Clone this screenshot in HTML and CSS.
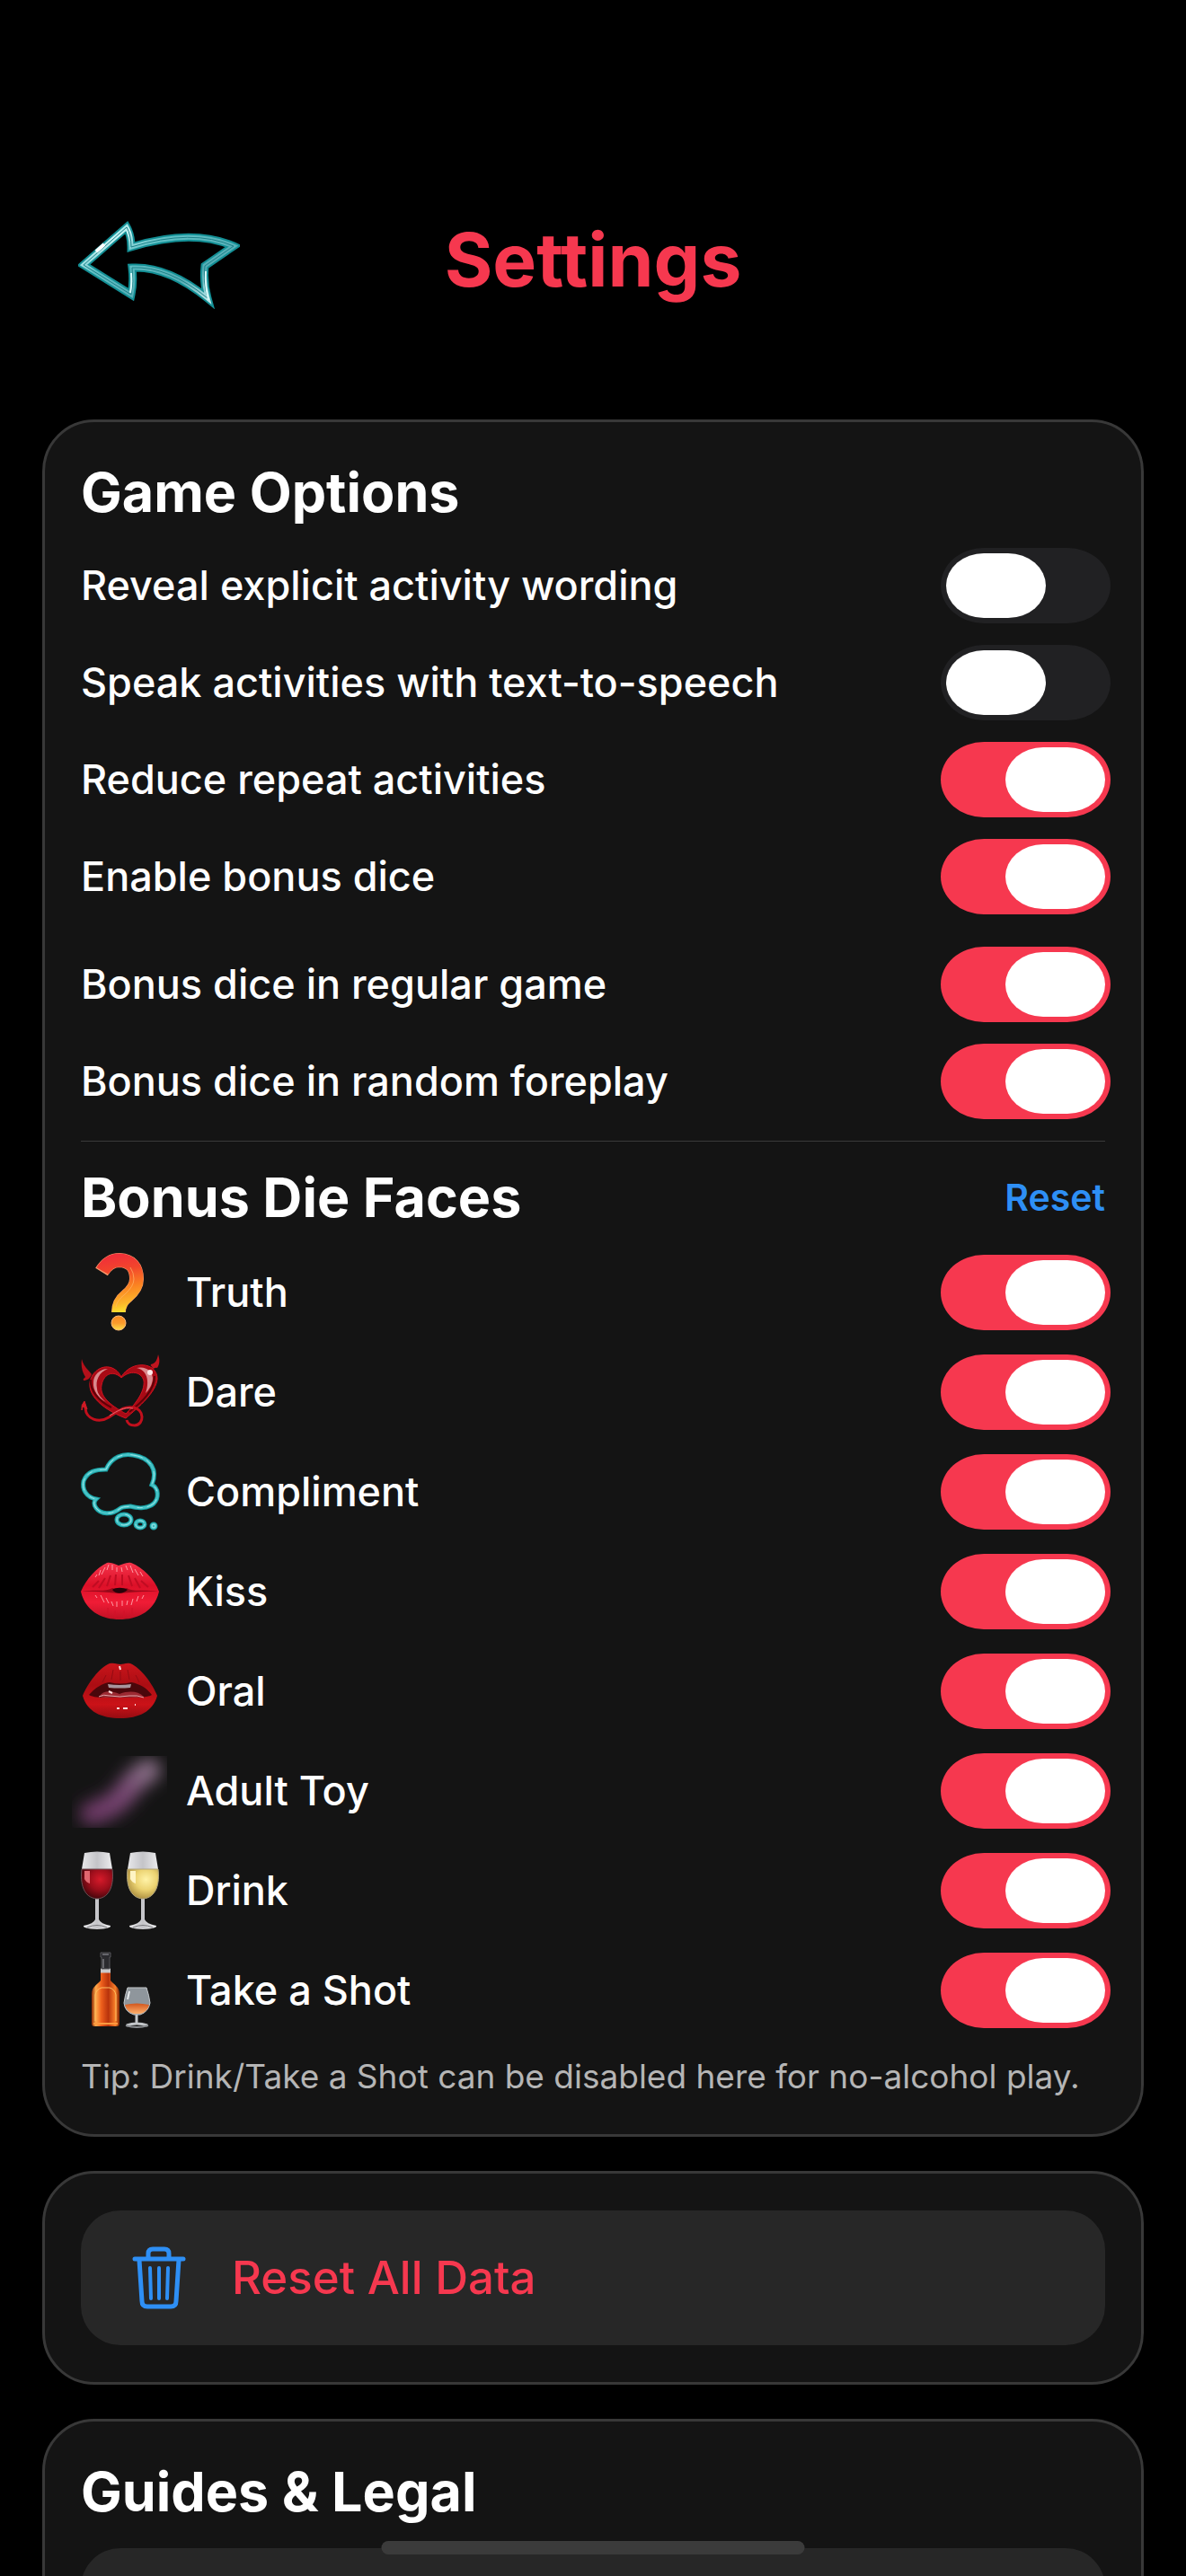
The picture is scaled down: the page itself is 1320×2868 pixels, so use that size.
FILE: index.html
```html
<!DOCTYPE html>
<html lang="en">

<head>
    <meta charset="utf-8">
    <meta name="viewport" content="width=device-width, initial-scale=1">
    <title>Settings</title>
    <link rel="stylesheet" href="styles.css">
</head>

<body>
    <header class="header">
        <button class="back" aria-label="Back">
            <svg viewBox="0 0 180 108" width="180" height="108" fill="none">
                <defs>
                    <linearGradient id="glass" x1="0" y1="0" x2="1" y2="1">
                        <stop offset="0" stop-color="#4fc4c8" />
                        <stop offset=".18" stop-color="#c9f5f5" />
                        <stop offset=".35" stop-color="#5fc0c5" />
                        <stop offset=".7" stop-color="#55adb5" />
                        <stop offset="1" stop-color="#d5f7f8" />
                    </linearGradient>
                    <path id="arrow" d="M6 59L54 17Q59 26 59 39Q127 18 173 38L141 60Q139 78 144 96Q100 60 60 62Q62 78 59 92Z" />
                </defs>
                <use href="#arrow" stroke="#138f95" stroke-width="9" />
                <use href="#arrow" stroke="url(#glass)" stroke-width="5" />
                <use href="#arrow" stroke="#1d8189" stroke-width="1" />
                <path d="M20 44L29 36" stroke="#fff" stroke-width="4" />
                <path d="M59 68Q60 80 58 90M142 66Q141 82 145 98" stroke="#d9fafa" stroke-width="2" />
            </svg>
        </button>
        <h1 class="title">Settings</h1>
    </header>

    <main class="content">
        <section class="card">
            <h2 class="heading">Game Options</h2>
            <div class="options">
                <div class="row">
                    <label for="explicit">Reveal explicit activity wording</label>
                    <input class="switch" type="checkbox" id="explicit">
                </div>
                <div class="row">
                    <label for="speak">Speak activities with text-to-speech</label>
                    <input class="switch" type="checkbox" id="speak">
                </div>
                <div class="row">
                    <label for="repeat">Reduce repeat activities</label>
                    <input class="switch" type="checkbox" id="repeat" checked>
                </div>
                <div class="row">
                    <label for="bonus">Enable bonus dice</label>
                    <input class="switch" type="checkbox" id="bonus" checked>
                </div>
            </div>
            <div class="options bonus">
                <div class="row">
                    <label for="regular">Bonus dice in regular game</label>
                    <input class="switch" type="checkbox" id="regular" checked>
                </div>
                <div class="row">
                    <label for="foreplay">Bonus dice in random foreplay</label>
                    <input class="switch" type="checkbox" id="foreplay" checked>
                </div>
            </div>

            <hr class="divider">

            <div class="headingRow">
                <h2 class="heading">Bonus Die Faces</h2>
                <button class="reset">Reset</button>
            </div>

            <div class="faces">
                <div class="row face">
                    <svg class="icon" viewBox="0 0 88 88" fill="none">
                        <defs>
                            <linearGradient id="fire" gradientUnits="userSpaceOnUse" x1="30" y1="0" x2="42" y2="67">
                                <stop offset="0" stop-color="#f02a3c" />
                                <stop offset=".3" stop-color="#f2452c" />
                                <stop offset=".6" stop-color="#fb8322" />
                                <stop offset=".85" stop-color="#fcb52a" />
                                <stop offset="1" stop-color="#fbe32f" />
                            </linearGradient>
                            <linearGradient id="dot" x1="0" y1="0" x2="0" y2="1">
                                <stop offset="0" stop-color="#f98a22" />
                                <stop offset=".5" stop-color="#fb9a2c" />
                                <stop offset="1" stop-color="#fde04a" />
                            </linearGradient>
                        </defs>
                        <path d="M23 21Q31 8 43 8Q62 9 62 29Q62 39 51 48Q42 55 42 66" stroke="#f79a6c" stroke-width="16" />
                        <path d="M24 20Q31 8 43 8Q62 9 62 29Q62 39 51 48Q42 55 42 66" stroke="url(#fire)" stroke-width="15" />
                        <path d="M55 16Q59 22 59 29Q59 37 49 46Q40 53 39 60" stroke="#ffb56a" stroke-width="1" opacity=".7" />
                        <circle cx="42" cy="78" r="8" fill="url(#dot)" stroke="#fcb878" />
                    </svg>
                    <label for="truth">Truth</label>
                    <input class="switch" type="checkbox" id="truth" checked>
                </div>
                <div class="row face">
                    <svg class="icon" viewBox="0 0 88 88" fill="none">
                        <path fill-rule="evenodd" d="M45 27C38 13 22 12 13 25C2 43 21 62 50 73C65 60 84 44 85 29C85 10 56 8 45 27ZM45 28C55 19 67 21 70 31C72 44 58 60 50 68C38 61 20 51 23 36C26 22 37 20 45 28Z" fill="#a80a15" stroke="#d2121f" />
                        <path d="M14 33C14 25 21 18 30 18C20 22 16 31 18 40C18 46 24 52 28 55C20 51 13 42 14 33Z" fill="#d98a8e" />
                        <path d="M62 17C71 15 79 19 80 28C80 35 76 41 72 45C75 37 77 20 62 17Z" fill="#dc8b8f" />
                        <path d="M11 30C10 42 20 54 34 61M82 26C82 42 68 55 54 66" stroke="#5c0007" stroke-width="2" />
                        <circle cx="77" cy="22" r="3" fill="#ffe9e9" />
                        <path d="M1 7C2 13 6 17 12 24C10 29 7 31 3 31C2 28 4 29 5 27C1 21 0 14 1 7Z" fill="#b5101a" />
                        <path d="M86 2C88 8 88 12 85 17C83 16 81 18 80 18C79 14 77 15 78 13C83 12 85 8 86 2Z" fill="#c0151f" />
                        <path d="M5 62C6 74 20 79 31 72C41 66 47 59 58 61C71 63 71 80 60 81C55 81 52 79 51 75" stroke="#c20f1c" stroke-width="3" />
                        <path d="M32 70C41 65 47 60 58 62" stroke="#e56a70" stroke-width="1" />
                        <path d="M4 54L7 63L2 60L1 64Q0 58 4 54Z" fill="#d01a25" stroke="#d01a25" />
                    </svg>
                    <label for="dare">Dare</label>
                    <input class="switch" type="checkbox" id="dare" checked>
                </div>
                <div class="row face">
                    <svg class="icon" viewBox="0 0 88 88" fill="none">
                        <defs>
                            <g id="cloud">
                                <path d="M28 19C34 5 47 1 58 3C78 6 86 20 79 36C87 40 87 51 81 57C75 62 65 63 55 60C50 61 46 60 43 63C34 70 22 69 17 62C14 58 14 55 17 52C6 50 1 41 3 32C7 21 17 19 28 19Z" />
                                <ellipse cx="48" cy="75" rx="8" ry="6" />
                                <ellipse cx="66" cy="80" rx="5" ry="4" />
                                <circle cx="81" cy="82" r="2" />
                            </g>
                        </defs>
                        <use href="#cloud" stroke="#169c9f" stroke-width="5" />
                        <use href="#cloud" stroke="#45c2c6" stroke-width="3" />
                        <use href="#cloud" stroke="#9be6e7" stroke-width="1" stroke-dasharray="14 5 6 9" />
                    </svg>
                    <label for="compliment">Compliment</label>
                    <input class="switch" type="checkbox" id="compliment" checked>
                </div>
                <div class="row face">
                    <svg class="icon" viewBox="0 0 88 88" fill="none">
                        <defs>
                            <linearGradient id="lips" x1="0" y1="0" x2="0" y2="1">
                                <stop offset="0" stop-color="#f5344b" />
                                <stop offset=".4" stop-color="#dc1028" />
                                <stop offset=".7" stop-color="#f01c36" />
                                <stop offset="1" stop-color="#c01024" />
                            </linearGradient>
                        </defs>
                        <path d="M0 44C6 30 17 18 29 12C35 11 38 14 42 15C47 14 50 11 56 12C69 17 82 30 87 44C82 65 65 75 43 75C22 75 5 65 0 44Z" fill="url(#lips)" />
                        <path d="M1 44C16 43 28 45 42 46C57 45 70 43 86 44C70 41 58 45 51 40C45 42 40 42 35 40C27 45 16 41 1 44Z" fill="#98091a" />
                        <path d="M35 42C38 39 48 39 52 42C48 46 40 48 35 42Z" fill="#26030a" />
                        <path d="M20 32L13 39M27 29L20 40M33 26L29 38M39 25L38 37M46 25L46 37M53 26L57 38M60 29L66 40M67 32L75 39" stroke="#c00c22" stroke-width="2" />
                        <path d="M18 25L16 28M22 20L20 26M27 17L23 25M31 14L29 20M35 14L35 20M40 17L40 22M45 17L46 22M50 15L52 20M55 15L58 23M60 19L64 26M66 22L69 27" stroke="#ff9aa3" stroke-width="1" />
                        <path d="M16 48L18 51M22 48L26 56M28 51L31 57M34 55L36 60M40 55L40 61M46 54L46 60M52 54L51 59M58 52L56 59M64 49L62 55M70 48L68 52" stroke="#ff9aa3" stroke-width="1" />
                        <path d="M30 62V70M38 65V73M48 65V73M57 62V70" stroke="#d21029" stroke-width="1" />
                    </svg>
                    <label for="kiss">Kiss</label>
                    <input class="switch" type="checkbox" id="kiss" checked>
                </div>
                <div class="row face">
                    <svg class="icon" viewBox="0 0 88 88" fill="none">
                        <defs>
                            <linearGradient id="mouth" x1="0" y1="0" x2="0" y2="1">
                                <stop offset="0" stop-color="#c9151b" />
                                <stop offset=".4" stop-color="#ab0d13" />
                                <stop offset=".75" stop-color="#cb1218" />
                                <stop offset="1" stop-color="#960c12" />
                            </linearGradient>
                        </defs>
                        <path d="M2 49C7 36 21 17 32 13C38 12 41 14 44 14C47 14 50 12 55 13C67 18 80 36 85 49C80 67 64 74 44 74C23 74 7 67 2 49Z" fill="url(#mouth)" />
                        <path d="M9 48C16 40 24 35 32 34C40 36 48 36 56 34C66 36 73 40 79 48C72 52 60 50 44 51C28 51 16 52 9 48Z" fill="#4a070b" />
                        <path d="M30 36Q43 38 56 36L55 40Q43 41 31 40Z" fill="#a8959c" />
                        <path d="M20 50C25 43 33 43 43 47C54 43 64 44 70 50C62 52 54 50 43 51C34 50 27 52 20 50Z" fill="#9c2a32" />
                        <path d="M20 50Q25 47 32 49Q44 51 54 49Q63 48 70 51" stroke="#e0a3a8" stroke-width="1" />
                        <path d="M31 44L35 46M43 16L44 20M40 63H43M47 63H52M60 59H61" stroke="#ffdede" stroke-width="2" />
                        <path d="M44 22V32M36 20L34 31M52 20L54 31M28 26L24 34M61 26L65 34" stroke="#940b12" stroke-width="1" />
                    </svg>
                    <label for="oral">Oral</label>
                    <input class="switch" type="checkbox" id="oral" checked>
                </div>
                <div class="row face">
                    <svg class="icon" viewBox="0 0 88 88" fill="none">
                        <defs>
                            <linearGradient id="toy" gradientUnits="userSpaceOnUse" x1="15" y1="68" x2="72" y2="23">
                                <stop offset="0" stop-color="#6f3a68" />
                                <stop offset=".6" stop-color="#7b4a76" />
                                <stop offset="1" stop-color="#8a7088" />
                            </linearGradient>
                            <filter id="soft" x="-50%" y="-50%" width="200%" height="200%">
                                <feGaussianBlur stdDeviation="9" />
                            </filter>
                            <clipPath id="frame">
                                <rect x="-10" y="5" width="106" height="80" />
                            </clipPath>
                        </defs>
                        <g clip-path="url(#frame)">
                            <path d="M12 69Q38 62 50 45Q62 28 76 21" stroke="url(#toy)" stroke-width="26" stroke-linecap="round" filter="url(#soft)" />
                        </g>
                    </svg>
                    <label for="adult">Adult Toy</label>
                    <input class="switch" type="checkbox" id="adult" checked>
                </div>
                <div class="row face">
                    <svg class="icon" viewBox="0 0 88 88" fill="none">
                        <defs>
                            <linearGradient id="clear" x1="0" y1="0" x2="1" y2="0">
                                <stop offset="0" stop-color="#e8e8ea" />
                                <stop offset=".5" stop-color="#c4c4c8" />
                                <stop offset="1" stop-color="#ececee" />
                            </linearGradient>
                            <radialGradient id="red" cx=".6" cy=".35" r=".7">
                                <stop offset="0" stop-color="#d61a2a" />
                                <stop offset=".5" stop-color="#9c0e1b" />
                                <stop offset="1" stop-color="#3d040a" />
                            </radialGradient>
                            <radialGradient id="white" cx=".6" cy=".35" r=".7">
                                <stop offset="0" stop-color="#fff3a8" />
                                <stop offset=".5" stop-color="#ecd372" />
                                <stop offset="1" stop-color="#a88a3c" />
                            </radialGradient>
                            <path id="wine" d="M1 20H35C37 36 33 52 18 53C3 52 -1 36 1 20Z" />
                            <g id="glassware">
                                <path d="M4 2Q18 -1 32 2L35 20H1Z" fill="url(#clear)" />
                                <path d="M16 53H20L20 76Q22 81 33 83Q34 86 18 87Q2 86 3 83Q14 81 16 76Z" fill="url(#clear)" />
                                <path d="M7 85Q18 80 29 85" stroke="#77777b" />
                            </g>
                        </defs>
                        <use href="#glassware" />
                        <use href="#wine" fill="url(#red)" stroke="#6c5055" />
                        <path d="M4 22H10V36Q6 35 4 31Z" fill="#e0666f" />
                        <use href="#glassware" x="51" />
                        <use href="#wine" x="51" fill="url(#white)" stroke="#b1a57c" />
                        <path d="M55 22H61V36Q57 35 55 31Z" fill="#fff4c4" />
                    </svg>
                    <label for="drink">Drink</label>
                    <input class="switch" type="checkbox" id="drink" checked>
                </div>
                <div class="row face">
                    <svg class="icon" viewBox="0 0 88 88" fill="none">
                        <defs>
                            <linearGradient id="rum" x1="0" y1="0" x2="1" y2="0">
                                <stop offset="0" stop-color="#8d2a06" />
                                <stop offset=".15" stop-color="#ffab4c" />
                                <stop offset=".35" stop-color="#ee5f1c" />
                                <stop offset=".6" stop-color="#b8330c" />
                                <stop offset=".85" stop-color="#f9802a" />
                                <stop offset="1" stop-color="#7d2204" />
                            </linearGradient>
                            <linearGradient id="brandy" x1="0" y1="0" x2="0" y2="1">
                                <stop offset="0" stop-color="#d1561d" />
                                <stop offset="1" stop-color="#ffb06b" />
                            </linearGradient>
                        </defs>
                        <path d="M22 33V22H33V33C37 38 43 40 43 48V81Q43 84 40 84H15Q12 84 12 81V48C12 40 18 38 22 33Z" fill="url(#rum)" />
                        <path d="M16 78V49Q17 43 23 41H32Q38 43 39 49V78" stroke="#ffc062" stroke-width="1" />
                        <path d="M14 81H41" stroke="#ff9a3f" stroke-width="2" />
                        <path d="M22 22H33" stroke="#c9c9cb" stroke-width="5" />
                        <path d="M22 2H33V7H32V20H23V7H22Z" fill="#2b2b2f" stroke="#555559" />
                        <path d="M24 4H31M25 9V19" stroke="#a2a2a8" />
                        <path d="M52 41H73Q76 50 77 58Q75 68 66 71H59Q49 68 48 58Q49 50 52 41Z" fill="#8f969c" stroke="#c6cacd" />
                        <path d="M49 60Q62 57 76 60Q74 68 66 70H59Q51 68 49 60Z" fill="url(#brandy)" />
                        <path d="M62 71V80M51 83Q62 79 74 83" stroke="#c3c6c9" stroke-width="3" />
                        <path d="M50 83Q62 87 75 83" stroke="#8b8e92" stroke-width="2" />
                        <path d="M54 45L52 54" stroke="#e6eaec" stroke-width="2" />
                    </svg>
                    <label for="shot">Take a Shot</label>
                    <input class="switch" type="checkbox" id="shot" checked>
                </div>
            </div>
            <p class="tip">Tip: Drink/Take a Shot can be disabled here for no-alcohol play.</p>
        </section>

        <section class="card">
            <button class="item">
                <svg class="trash" viewBox="0 0 60 70" fill="none" stroke="#2e8ff5" stroke-linecap="round" stroke-linejoin="round">
                    <path d="M3 14H57" stroke-width="5" />
                    <path d="M18 13V8Q18 3 23 3H36Q41 3 41 8V13" stroke-width="5" />
                    <path d="M8 15L11 61Q11 67 17 67H43Q49 67 49 61L52 15" stroke-width="5" />
                    <path d="M20 24L21 58M30 24V58M40 24L39 58" stroke-width="4" />
                </svg>
                Reset All Data
            </button>
        </section>

        <section class="card">
            <h2 class="heading">Guides &amp; Legal</h2>
            <div class="item guides"></div>
        </section>
    </main>

    <div class="homeBar"></div>
</body>

</html>
```

FILE: styles.css
```css
* {
    box-sizing: border-box;
}

body {
    margin: 0;
    height: 100vh;
    overflow: hidden;
    background-color: #000;
    color: #fff;
    font-family: Inter, "Liberation Sans", sans-serif;
    font-size: 45px;
    font-weight: 500;
}

button {
    padding: 0;
    border: 0;
    background: none;
    color: inherit;
    font: inherit;
    cursor: pointer;
}

svg {
    display: block;
    flex: none;
}

/* header */
.header {
    display: grid;
    grid-template-columns: 1fr auto 1fr;
    align-items: center;
    padding: 236px 87px 123px;
}

.back {
    justify-self: start;
}

.title {
    margin: 0;
    color: #f6384f;
    font-size: 82px;
    font-weight: 700;
    line-height: 96px;
}

/* cards */
.content {
    display: flex;
    flex-direction: column;
    gap: 38px;
    padding: 0 47px;
}

.card {
    padding: 41px 40px;
    border: 3px solid #383838;
    border-radius: 58px;
    background-color: #141414;
}

.heading {
    margin: 0;
    font-size: 61px;
    font-weight: 700;
    line-height: 74px;
}

.headingRow {
    display: flex;
    align-items: center;
    justify-content: space-between;
}

.reset {
    color: #2e8ff5;
    font-size: 41px;
    font-weight: 600;
    line-height: 48px;
}

.options {
    display: flex;
    flex-direction: column;
    gap: 24px;
    margin-top: 25px;
}

.bonus {
    margin-top: 36px;
}

.row {
    display: flex;
    align-items: center;
    justify-content: space-between;
    margin-right: -6px;
}

.row label {
    flex: 1;
    line-height: 56px;
}

.divider {
    height: 1px;
    margin: 24px 0 25px;
    border: 0;
    background-color: #3a3a3a;
}

.faces {
    display: flex;
    flex-direction: column;
    gap: 23px;
    margin-top: 25px;
}

.face {
    gap: 29px;
}

.icon {
    width: 88px;
    height: 88px;
    overflow: visible;
}

.tip {
    margin: 28px 0 0;
    color: #b5b5b5;
    font-size: 37px;
    font-weight: 400;
    line-height: 47px;
}

/* on/off switch */
.switch {
    appearance: none;
    flex: none;
    width: 189px;
    height: 84px;
    margin: 0;
    padding: 6px;
    border-radius: 48px / 42px;
    background-color: #212123;
    cursor: pointer;
}

.switch::before {
    content: "";
    display: block;
    width: 111px;
    height: 72px;
    border-radius: 42px / 36px;
    background-color: #fff;
}

.switch:checked {
    background-color: #f6384f;
}

.switch:checked::before {
    margin-left: auto;
}

/* list buttons */
.item {
    display: flex;
    align-items: center;
    gap: 51px;
    width: 100%;
    padding: 42px 57px;
    border-radius: 44px;
    background-color: #272727;
    color: #f6384f;
    font-size: 51px;
    line-height: 66px;
}

.trash {
    width: 60px;
    height: 70px;
    margin: -2px 0;
}

.guides {
    height: 150px;
    margin-top: 26px;
}

.homeBar {
    position: fixed;
    bottom: 24px;
    left: 50%;
    width: 471px;
    height: 15px;
    transform: translateX(-50%);
    border-radius: 8px;
    background-color: #3b3b3b;
}
```
